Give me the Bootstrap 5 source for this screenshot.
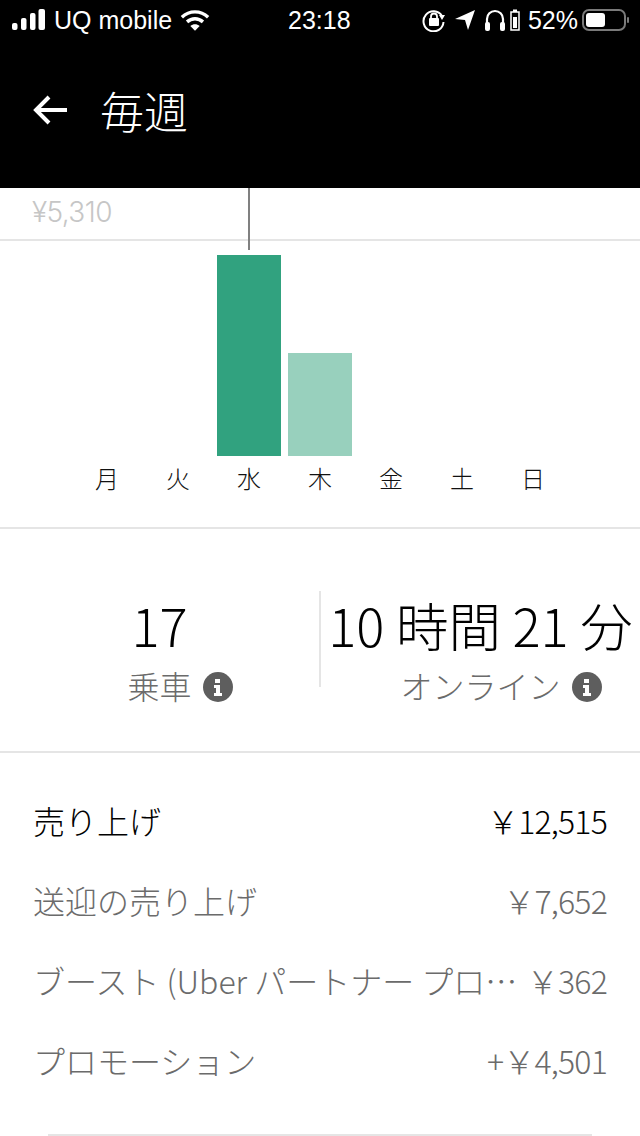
<!DOCTYPE html>
<html lang="ja">
<head>
<meta charset="UTF-8">
<meta name="viewport" content="width=device-width, initial-scale=1.0">
<title>毎週</title>
<link rel="stylesheet" href="https://cdn.jsdelivr.net/npm/bootstrap@5.3.7/dist/css/bootstrap.min.css">
<style>
body { width: 640px; height: 1136px; overflow: hidden; background: #fff; font-family: "Noto Sans", "Noto Sans CJK JP", sans-serif; font-weight: 300; }
.status-bar { height: 40px; padding: 0 10px 0 12px; font-family: "Liberation Sans", sans-serif; font-size: 25px; font-weight: 400; color: #fff; background: #000; line-height: 40px; position: relative; }
.status-time { position: absolute; left: 288px; top: 0; }
.top-head { height: 148px; background: #000; color: #fff; padding: 46px 0 0 33px; }
.top-head h1 { font-size: 44px; font-weight: 300; margin: 0 0 0 33px; line-height: 48px; font-family: "Noto Sans CJK JP", sans-serif; }
.max-label { height: 51px; padding: 5px 0 0 32px; font-size: 28px; line-height: 38px; color: #c6c6c6; letter-spacing: -.6px; font-family: "Inter", sans-serif; font-weight: 300; }
.rule { height: 2px; background: #e5e5e5; }
.bars { height: 215px; gap: 7px; width: 490px; margin: 0 auto; }
.bar-col { width: 64px; position: relative; }
.bar-fill { width: 64px; }
.bar-dark { height: 201px; background: #31a27f; }
.bar-light { height: 103px; background: #98d0bd; }
.bar-tick { position: absolute; left: 31px; top: -67px; width: 2px; height: 62px; background: #808080; }
.day-row { width: 490px; height: 71px; margin: 0 auto; gap: 7px; }
.day-row span { width: 64px; text-align: center; font-size: 24px; line-height: 44px; color: #111; font-family: "Noto Sans CJK JP", sans-serif; font-weight: 300; }
.stat-row { height: 222px; padding-top: 62px; }
.stat-col { flex: 1 1 0; min-width: 0; white-space: nowrap; text-align: center; }
.stat-split { width: 2px; height: 96px; background: #e5e5e5; }
.stat-num { font-size: 52.5px; line-height: 66px; color: #000; font-weight: 300; font-family: "Noto Sans CJK JP", sans-serif; }
.stat-sub { font-size: 32px; line-height: 44px; margin-top: 6px; color: #6b6b6b; font-family: "Noto Sans CJK JP", sans-serif; font-weight: 300; }
.stat-sub svg { margin: 4px -41px 0 11px; }
.money { padding: 45px 33px 16px 33px; font-family: "Noto Sans CJK JP", sans-serif; font-weight: 300; }
.money-row { height: 80px; font-size: 32px; line-height: 44px; color: #6b6b6b; white-space: nowrap; }
.money-row.lead-row { color: #000; }
.money-val { letter-spacing: -.8px; }
.end-rule { height: 2px; background: #e5e5e5; margin: 0 48px; }
</style>
</head>
<body>
<div class="status-bar d-flex align-items-center">
  <svg width="34" height="22" viewBox="0 0 34 22" class="me-2"><g fill="#fff"><rect x="0" y="14" width="5.500" height="7" rx="2"/><rect x="9" y="9" width="5.500" height="12" rx="2"/><rect x="18" y="4" width="5.500" height="17" rx="2"/><rect x="26.500" y="0" width="6.500" height="21" rx="2"/></g></svg>
  <span>UQ mobile</span>
  <svg width="30" height="24" viewBox="0 0 32 24" class="ms-2"><g fill="none" stroke="#fff" stroke-width="3.600"><path d="M2 9c8-7.500 20-7.500 28 0"/><path d="M7.500 14c5-4.500 12-4.500 17 0"/></g><path d="M11 18.500c3-2.500 7-2.500 10 0l-5 5z" fill="#fff"/></svg>
  <span class="status-time">23:18</span>
  <div class="ms-auto d-flex align-items-center">
    <svg width="24" height="24" viewBox="0 0 24 24"><path d="M20 8a10 10 0 1 0 1.500 6" fill="none" stroke="#fff" stroke-width="2"/><path d="M17 7h6l-3 5z" fill="#fff"/><rect x="7" y="10" width="10" height="8" rx="1" fill="#fff"/><path d="M9 10V8.500a3 3 0 0 1 6 0V10" fill="none" stroke="#fff" stroke-width="1.800"/></svg>
    <svg width="22" height="22" viewBox="0 0 22 22" class="ms-2"><path d="M21 1 1 10l10 1 3 10z" fill="#fff"/></svg>
    <svg width="22" height="24" viewBox="0 0 22 24" class="ms-2"><path d="M3 17v-6a8 8 0 0 1 16 0v6" fill="none" stroke="#fff" stroke-width="2.200"/><rect x="1" y="14" width="5" height="9" rx="2" fill="#fff"/><rect x="16" y="14" width="5" height="9" rx="2" fill="#fff"/></svg>
    <svg width="10" height="24" viewBox="0 0 10 24" class="ms-1"><rect x="1" y="4" width="8" height="18" fill="none" stroke="#fff" stroke-width="1.500"/><rect x="3" y="1.500" width="4" height="2.500" fill="#fff"/><rect x="3" y="9" width="4" height="11" fill="#fff"/></svg>
    <span class="ms-2">52%</span>
    <svg width="48" height="24" viewBox="0 0 48 24" class="ms-1"><rect x="1" y="2" width="42" height="20" rx="6" fill="none" stroke="#7a7a7a" stroke-width="2"/><rect x="4" y="5" width="19" height="14" rx="3" fill="#fff"/><rect x="45" y="9" width="2" height="6" rx="1" fill="#7a7a7a"/></svg>
  </div>
</div>
<header class="top-head d-flex align-items-start">
  <svg width="34" height="32" viewBox="0 0 34 32" class="mt-2"><path d="M34 16H4M16 3 3 16l13 13" fill="none" stroke="#fff" stroke-width="4"/></svg>
  <h1>毎週</h1>
</header>
<main>
  <div class="max-label">¥5,310</div>
  <div class="rule"></div>
  <div class="bars d-flex align-items-end">
    <div class="bar-col"></div>
    <div class="bar-col"></div>
    <div class="bar-col"><div class="bar-tick"></div><div class="bar-fill bar-dark"></div></div>
    <div class="bar-col"><div class="bar-fill bar-light"></div></div>
    <div class="bar-col"></div>
    <div class="bar-col"></div>
    <div class="bar-col"></div>
  </div>
  <div class="day-row d-flex">
    <span>月</span><span>火</span><span>水</span><span>木</span><span>金</span><span>土</span><span>日</span>
  </div>
  <div class="rule"></div>
  <div class="stat-row d-flex align-items-start">
    <div class="stat-col">
      <div class="stat-num">17</div>
      <div class="stat-sub d-flex justify-content-center align-items-center">乗車
        <svg width="30" height="30" viewBox="0 0 30 30"><circle cx="15" cy="15" r="15" fill="#5e5e5e"/><path d="M12 7h5v4h-5zM11 13h6v8h2v3h-8v-3h2v-5h-2z" fill="#fff"/></svg>
      </div>
    </div>
    <div class="stat-split"></div>
    <div class="stat-col">
      <div class="stat-num">10 時間 21 分</div>
      <div class="stat-sub d-flex justify-content-center align-items-center">オンライン
        <svg width="30" height="30" viewBox="0 0 30 30"><circle cx="15" cy="15" r="15" fill="#5e5e5e"/><path d="M12 7h5v4h-5zM11 13h6v8h2v3h-8v-3h2v-5h-2z" fill="#fff"/></svg>
      </div>
    </div>
  </div>
  <div class="rule"></div>
  <section class="money">
    <div class="money-row lead-row d-flex justify-content-between"><span>売り上げ</span><span class="money-val">￥12,515</span></div>
    <div class="money-row d-flex justify-content-between"><span>送迎の売り上げ</span><span class="money-val">￥7,652</span></div>
    <div class="money-row d-flex justify-content-between"><span>ブースト (Uber パートナー プロ…</span><span class="money-val">￥362</span></div>
    <div class="money-row d-flex justify-content-between"><span>プロモーション</span><span class="money-val">+￥4,501</span></div>
  </section>
  <div class="end-rule"></div>
</main>
<script src="https://cdn.jsdelivr.net/npm/bootstrap@5.3.7/dist/js/bootstrap.bundle.min.js"></script>
</body>
</html>
